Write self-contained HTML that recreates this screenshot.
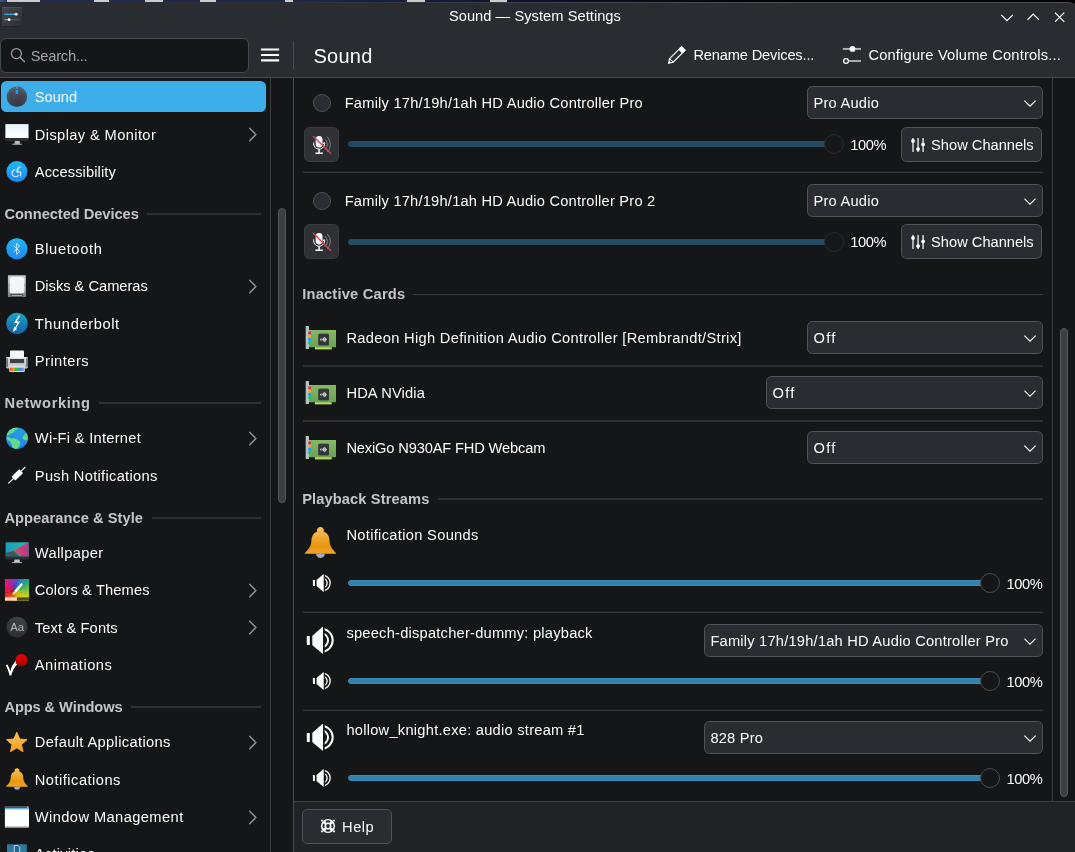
<!DOCTYPE html>
<html lang="en">
<head>
<meta charset="utf-8">
<title>Sound — System Settings</title>
<style>
html,body{margin:0;padding:0;background:#141618;}
body{width:1075px;height:852px;overflow:hidden;position:relative;font-family:"Liberation Sans",sans-serif;font-size:14.67px;color:#fcfcfc;}
#win{position:absolute;left:0;top:0;width:1075px;height:852px;overflow:hidden;will-change:transform;}
.b{position:absolute;display:block;}
.t{position:absolute;white-space:pre;}
</style>
</head>
<body>
<div id="win">
<div id="chrome" aria-hidden="true">
<div class="b" style="left:0px;top:0px;width:1075px;height:3px;background:#000000;"></div>
<div class="b" style="left:0px;top:0px;width:1075px;height:2px;background:linear-gradient(90deg,#4a5590 0,#222c52 8px,#1d2748 300px,#0e1230 520px,#05060a 720px,#000 820px);"></div>
<div class="b" style="left:7px;top:0px;width:33px;height:2px;background:#c9cacd;"></div>
<div class="b" style="left:93.5px;top:0px;width:15.5px;height:2px;background:#c9cacd;"></div>
<div class="b" style="left:145px;top:0px;width:18px;height:2px;background:#c9cacd;"></div>
<div class="b" style="left:200px;top:0px;width:16px;height:2px;background:#c9cacd;"></div>
<div class="b" style="left:285px;top:0px;width:8px;height:2px;background:#c9cacd;"></div>
<div class="b" style="left:407px;top:0px;width:18px;height:2px;background:#c9cacd;"></div>
<div class="b" style="left:490px;top:0px;width:17px;height:2px;background:#c9cacd;"></div>
<div class="b" style="left:0px;top:2px;width:1075px;height:76px;background:#292c30;border-top-right-radius:6px;overflow:hidden;"></div>
<div class="b" style="left:0px;top:2px;width:1075px;height:6px;border-top-right-radius:6px;box-sizing:border-box;border-top:1px solid #4a4d51;border-right:1px solid #3a3d41;-webkit-mask-image:linear-gradient(90deg,rgba(0,0,0,0) 0,rgba(0,0,0,0.15) 300px,#000 700px);mask-image:linear-gradient(90deg,rgba(0,0,0,0) 0,rgba(0,0,0,0.15) 300px,#000 700px);"></div>
<div class="b" style="left:0px;top:77px;width:1075px;height:1px;background:#474b50;"></div>
<div class="b" style="left:0px;top:78px;width:1075px;height:774px;background:#141618;"></div>
<div class="b" style="left:294px;top:801px;width:781px;height:51px;background:#202326;"></div>
<div class="b" style="left:294px;top:801px;width:781px;height:1px;background:#3d4044;"></div>
<div class="b" style="left:270px;top:78px;width:1px;height:774px;background:#3a3c3f;"></div>
<div class="b" style="left:293px;top:78px;width:1px;height:774px;background:#484c52;"></div>
<div class="b" style="left:293px;top:41px;width:1px;height:28px;background:#4b4f54;"></div>
<div class="b" style="left:1052px;top:78px;width:1px;height:723px;background:#3b3d40;"></div>
</div>
<header id="titlebar">
<svg class="b" style="left:2px;top:7px;" width="20" height="20" viewBox="0 0 20 20"><defs><linearGradient id="g1" x1="0" y1="0" x2="1" y2="1"><stop offset="0" stop-color="#45484c"/><stop offset="1" stop-color="#2b2e32"/></linearGradient></defs><rect x="0" y="0" width="20" height="20" rx="1" fill="url(#g1)"/><rect x="0.5" y="0" width="19" height="0.8" fill="#5a5d61" opacity="0.8"/><rect x="0.5" y="19.3" width="19" height="0.7" fill="#1b1d20"/><path d="M2.3 7.3H14" stroke="#3daee9" stroke-width="1.3"/><path d="M14 7.3H17.5" stroke="#4a4d51" stroke-width="1"/><circle cx="14.1" cy="7.3" r="1.4" fill="#fff"/><path d="M2.3 12.7H7" stroke="#3daee9" stroke-width="1.3"/><path d="M8 12.7H17.5" stroke="#4f5256" stroke-width="1.2"/><circle cx="7.1" cy="12.7" r="1.4" fill="#fff"/></svg>
<div class="t" style="left:448.90px;top:4.26px;line-height:24px;letter-spacing:0.042px;">Sound — System Settings</div>
<svg class="b" style="left:999px;top:10px;" width="70" height="16" viewBox="0 0 70 16"><g fill="none" stroke="#fcfcfc" stroke-width="1.25"><path d="M2.2 4.9 8 10.7 13.8 4.9"/><path d="M28.5 9.8 34.2 4.1 39.9 9.8"/><path d="M56 2.6 65.3 11.9M65.3 2.6 56 11.9"/></g></svg>
</header>
<div id="toolbar" role="toolbar">
<div class="b" style="left:0px;top:38px;width:248.5px;height:35px;background:#141618;border:1px solid #46494d;border-radius:6px;box-sizing:border-box;"></div>
<svg class="b" style="left:10px;top:46px;" width="18" height="18" viewBox="0 0 18 18"><g fill="none" stroke="#9a9ea2" stroke-width="1.25"><circle cx="6.4" cy="7.6" r="5"/><path d="M10 11.2 14.5 15.7" stroke-linecap="round"/></g></svg>
<div class="t" style="left:30.70px;top:43.76px;line-height:24px;color:#a1a3a6;letter-spacing:-0.207px;">Search...</div>
<svg class="b" style="left:261px;top:48px;" width="19" height="14" viewBox="0 0 19 14"><g fill="#fcfcfc"><rect x="0" y="0.4" width="18.1" height="2.2" rx="0.3"/><rect x="0" y="5.9" width="18.1" height="2.2" rx="0.3"/><rect x="0" y="11.3" width="18.1" height="2.2" rx="0.3"/></g></svg>
<div class="t" style="left:313.40px;top:40.36px;line-height:32px;font-size:20px;letter-spacing:0.289px;">Sound</div>
<svg class="b" style="left:666px;top:45px;" width="22" height="22" viewBox="0 0 22 22"><g transform="translate(2.1 18.7) rotate(-45)"><path d="M0.7 0 L4.6 -2.5 H21.6 V2.5 H4.6 Z" fill="none" stroke="#fcfcfc" stroke-width="1.2" stroke-linejoin="miter"/><rect x="17.2" y="-2.5" width="4.4" height="5" fill="#fcfcfc"/><path d="M4.6 -2.5 V2.5" stroke="#fcfcfc" stroke-width="1.1" fill="none"/><path d="M0.7 0 L2.9 -1.4 V1.4Z" fill="#fcfcfc"/></g></svg>
<div class="t" style="left:693.40px;top:43.26px;line-height:24px;letter-spacing:-0.176px;">Rename Devices...</div>
<svg class="b" style="left:841px;top:44px;" width="22" height="22" viewBox="0 0 22 22"><path d="M1.8 4.9H20" stroke="#b4b6b8" stroke-width="1.9"/><circle cx="11.5" cy="4.9" r="2.9" fill="#fcfcfc"/><path d="M7.6 17H20" stroke="#b4b6b8" stroke-width="1.9"/><circle cx="5" cy="17" r="2.4" fill="none" stroke="#fcfcfc" stroke-width="1.3"/></svg>
<div class="t" style="left:868.40px;top:43.26px;line-height:24px;letter-spacing:0.190px;">Configure Volume Controls...</div>
</div>
<nav id="sidebar">
<div class="b" style="left:1px;top:81px;width:264.5px;height:31.4px;background:#3daee9;border-radius:5.5px;"></div>
<svg class="b" style="left:4px;top:84px;" width="26" height="26" viewBox="4 84 26 26"><defs><linearGradient id="g2" x1="0" y1="0" x2="0" y2="1"><stop offset="0" stop-color="#626977"/><stop offset="1" stop-color="#353b45"/></linearGradient><linearGradient id="g3" x1="0" y1="0" x2="0" y2="1"><stop offset="0" stop-color="#4e5460"/><stop offset="1" stop-color="#333a44"/></linearGradient></defs><circle cx="16.9" cy="96.7" r="10.15" fill="url(#g2)"/><circle cx="16.9" cy="96.7" r="9.6" fill="none" stroke="#3a404a" stroke-width="1.1" stroke-dasharray="1.6 1.4" opacity="0.55"/><circle cx="16.9" cy="96.7" r="8.3" fill="url(#g3)"/><rect x="15.9" y="87.2" width="2" height="1.3" fill="#5aaeea" opacity="0.8"/><rect x="15.6" y="89.9" width="2.6" height="4" rx="0.6" fill="#1d99f3"/></svg>
<div class="t" style="left:34.80px;top:85.16px;line-height:24px;">Sound</div>
<svg class="b" style="left:4px;top:121px;" width="26" height="26" viewBox="4 121 26 26"><defs><linearGradient id="g4" x1="0" y1="0" x2="0" y2="1"><stop offset="0" stop-color="#e6f6fd"/><stop offset="1" stop-color="#ffffff"/></linearGradient></defs><rect x="5.2" y="123.9" width="23.5" height="17.2" rx="0.8" fill="#2a2c2f"/><rect x="5.4" y="124.1" width="23.1" height="13.9" fill="url(#g4)"/><rect x="14.7" y="141.1" width="5.1" height="2.8" fill="#c3c7ca"/><rect x="12.2" y="143.7" width="9.6" height="1.1" fill="#a9adb1"/></svg>
<div class="t" style="left:34.80px;top:122.66px;line-height:24px;letter-spacing:0.384px;">Display &amp; Monitor</div>
<svg class="b" style="left:246px;top:126px;" width="14" height="17" viewBox="0 0 14 17"><path d="M3.7 2.3 9.9 8.5 3.7 14.7" fill="none" stroke="#909295" stroke-width="1.5" stroke-linecap="round" stroke-linejoin="round"/></svg>
<svg class="b" style="left:4px;top:159px;" width="26" height="26" viewBox="4 159 26 26"><defs><linearGradient id="g5" x1="0" y1="0" x2="0" y2="1"><stop offset="0" stop-color="#22b6f9"/><stop offset="1" stop-color="#1e88ef"/></linearGradient></defs><circle cx="16.9" cy="171.6" r="10.5" fill="url(#g5)"/><g fill="none" stroke="#e6f4ff" stroke-linecap="round" stroke-linejoin="round"><path d="M14.67 169.72A3.6 3.6 0 1 0 18.55 175.26" stroke-width="1.05"/><path d="M17.9 168.4 17.2 171.6" stroke-width="1.7"/><path d="M17.2 172H20.6V175.9" stroke-width="1.05"/></g><circle cx="19.5" cy="167.3" r="0.95" fill="#e6f4ff"/></svg>
<div class="t" style="left:34.80px;top:160.16px;line-height:24px;letter-spacing:0.098px;">Accessibility</div>
<div class="t" style="left:4.40px;top:201.86px;line-height:24px;font-weight:700;color:#c4c5c6;letter-spacing:-0.051px;">Connected Devices</div>
<div class="b" style="left:147.4px;top:213px;width:113.6px;height:2px;background:#2c3033;"></div>
<svg class="b" style="left:4px;top:236px;" width="26" height="26" viewBox="4 236 26 26"><defs><linearGradient id="g6" x1="0" y1="0" x2="0" y2="1"><stop offset="0" stop-color="#22b6f9"/><stop offset="1" stop-color="#1e88ef"/></linearGradient></defs><circle cx="16.9" cy="248.8" r="10.6" fill="url(#g6)"/><path d="M13.6 245.6 19.7 251.6 16.7 254.3V243.3L19.7 246 13.6 252" fill="none" stroke="#dff1fe" stroke-width="0.9" stroke-linejoin="round"/></svg>
<div class="t" style="left:34.80px;top:236.86px;line-height:24px;letter-spacing:0.633px;">Bluetooth</div>
<svg class="b" style="left:4px;top:273px;" width="26" height="26" viewBox="4 273 26 26"><defs><linearGradient id="g7" x1="0" y1="0" x2="0" y2="1"><stop offset="0" stop-color="#c9cdcf"/><stop offset="1" stop-color="#79848a"/></linearGradient></defs><rect x="7.9" y="275.2" width="18" height="21.7" rx="0.7" fill="url(#g7)"/><path d="M12.3 277H21.8Q24.4 277 24.4 279.6V283.2Q23.5 285.1 24.4 287V290.7Q24.4 293.3 21.8 293.3H12.3Q9.7 293.3 9.7 290.7V287Q10.6 285.1 9.7 283.2V279.6Q9.7 277 12.3 277Z" fill="#f4f5f6"/><rect x="10.4" y="294.1" width="12.9" height="2.5" rx="0.9" fill="#3b4246"/><rect x="11.6" y="294.9" width="10.6" height="1.1" fill="#e8a838"/></svg>
<div class="t" style="left:34.80px;top:274.36px;line-height:24px;letter-spacing:-0.015px;">Disks &amp; Cameras</div>
<svg class="b" style="left:246px;top:278px;" width="14" height="17" viewBox="0 0 14 17"><path d="M3.7 2.3 9.9 8.5 3.7 14.7" fill="none" stroke="#909295" stroke-width="1.5" stroke-linecap="round" stroke-linejoin="round"/></svg>
<svg class="b" style="left:4px;top:311px;" width="26" height="26" viewBox="4 311 26 26"><defs><linearGradient id="g8" x1="0" y1="0" x2="0" y2="1"><stop offset="0" stop-color="#1ba3c6"/><stop offset="1" stop-color="#1560a6"/></linearGradient></defs><circle cx="17" cy="323.4" r="10.7" fill="url(#g8)"/><path d="M19.4 315.7 15.4 322.2H18.7L15.6 328" fill="none" stroke="#fff" stroke-width="1.35" stroke-linejoin="miter"/><path d="M14.2 326.7 17 329.1 13 331.9Z" fill="#fff"/></svg>
<div class="t" style="left:34.80px;top:311.86px;line-height:24px;letter-spacing:0.607px;">Thunderbolt</div>
<svg class="b" style="left:4px;top:348px;" width="26" height="26" viewBox="4 348 26 26"><defs><linearGradient id="g9" x1="0" y1="0" x2="1" y2="0"><stop offset="0" stop-color="#e8503a"/><stop offset="0.22" stop-color="#e89a1c"/><stop offset="0.48" stop-color="#2fc03a"/><stop offset="0.74" stop-color="#3a8ff0"/><stop offset="1" stop-color="#c084e0"/></linearGradient><linearGradient id="g10" x1="0" y1="0" x2="0" y2="1"><stop offset="0" stop-color="#e2e5e8"/><stop offset="1" stop-color="#b9bec3"/></linearGradient></defs><rect x="6" y="357" width="22" height="11.4" rx="1.4" fill="url(#g10)"/><rect x="6.3" y="358.2" width="1.4" height="8.6" fill="#4c525a"/><rect x="26.3" y="358.2" width="1.4" height="8.6" fill="#4c525a"/><rect x="9.9" y="358.6" width="14.2" height="4.5" fill="#3a4148"/><rect x="10" y="350.4" width="14" height="8.3" rx="0.9" fill="#f4f5f6"/><rect x="9.2" y="365.4" width="15.6" height="6.5" rx="0.9" fill="#dcdfe2"/><rect x="10" y="367.7" width="14" height="3.3" fill="url(#g9)"/><rect x="26.4" y="365" width="1.1" height="1.3" fill="#38b35a"/></svg>
<div class="t" style="left:34.80px;top:349.36px;line-height:24px;letter-spacing:0.471px;">Printers</div>
<div class="t" style="left:4.40px;top:391.26px;line-height:24px;font-weight:700;color:#c4c5c6;letter-spacing:0.654px;">Networking</div>
<div class="b" style="left:98.7px;top:402px;width:162.3px;height:2px;background:#2c3033;"></div>
<svg class="b" style="left:4px;top:425px;" width="26" height="26" viewBox="4 425 26 26"><defs><linearGradient id="g11" x1="0" y1="0" x2="0" y2="1"><stop offset="0" stop-color="#25a0e0"/><stop offset="1" stop-color="#1f86ee"/></linearGradient><clipPath id="c12"><circle cx="17" cy="438.2" r="10.8"/></clipPath></defs><circle cx="17" cy="438.2" r="10.8" fill="url(#g11)"/><g clip-path="url(#c12)" fill="#62d98d"><path d="M7 431.5Q10 427.5 17 427.6L17.6 429.2 14 430.8 13.5 433 10.4 433.4 9.4 435.3 6 435Z"/><path d="M6.4 436.3 9.5 437.4 11.3 438.5 13.5 438 17.5 439.6 20.6 442.3 19.6 445.4 17.6 448.5 15 449.3 12.5 447.5 11.6 443.7 9.6 441 7.6 440Z"/><path d="M28.4 433 25.6 433.6 23 436.2 22.6 438.4 25 440.2 28.4 440.4Z"/></g></svg>
<div class="t" style="left:34.80px;top:426.26px;line-height:24px;letter-spacing:0.279px;">Wi-Fi &amp; Internet</div>
<svg class="b" style="left:246px;top:430px;" width="14" height="17" viewBox="0 0 14 17"><path d="M3.7 2.3 9.9 8.5 3.7 14.7" fill="none" stroke="#909295" stroke-width="1.5" stroke-linecap="round" stroke-linejoin="round"/></svg>
<svg class="b" style="left:4px;top:463px;" width="26" height="26" viewBox="4 463 26 26"><path d="M8.3 483.5 25.4 467" stroke="#e8e9ea" stroke-width="1.1"/><rect x="-5.3" y="-2.7" width="10.6" height="5.4" rx="0.4" fill="#fff" transform="translate(17.3 474.9) rotate(-44)"/></svg>
<div class="t" style="left:34.80px;top:463.76px;line-height:24px;letter-spacing:0.305px;">Push Notifications</div>
<div class="t" style="left:4.40px;top:505.66px;line-height:24px;font-weight:700;color:#c4c5c6;letter-spacing:0.055px;">Appearance &amp; Style</div>
<div class="b" style="left:151.6px;top:517px;width:109.4px;height:2px;background:#2c3033;"></div>
<svg class="b" style="left:4px;top:539px;" width="26" height="26" viewBox="4 539 26 26"><defs><linearGradient id="g13" x1="0" y1="0" x2="1" y2="0"><stop offset="0" stop-color="#1d9cc4"/><stop offset="1" stop-color="#1bc4a0"/></linearGradient><linearGradient id="g14" x1="0" y1="0" x2="1" y2="0"><stop offset="0" stop-color="#e34a5e"/><stop offset="1" stop-color="#b93495"/></linearGradient><clipPath id="c15"><rect x="5.5" y="542.2" width="23.2" height="14.4"/></clipPath></defs><rect x="5.2" y="541.9" width="23.8" height="17.6" rx="0.8" fill="#2a2c2f"/><g clip-path="url(#c15)"><rect x="5.5" y="542.2" width="23.2" height="14.4" fill="url(#g13)"/><path d="M5.5 553 13.5 550.7 20 556.6H5.5Z" fill="#41595b"/><path d="M28.7 542.2V556.6H22L13.5 550.7Z" fill="url(#g14)"/></g><rect x="14.3" y="559.5" width="5.4" height="2.6" fill="#c3c7ca"/><rect x="12.2" y="562" width="9.6" height="1.1" fill="#a9adb1"/></svg>
<div class="t" style="left:34.80px;top:540.66px;line-height:24px;letter-spacing:0.370px;">Wallpaper</div>
<svg class="b" style="left:4px;top:577px;" width="26" height="26" viewBox="4 577 26 26"><defs><clipPath id="c16"><rect x="4.9" y="579" width="24.2" height="21.8" rx="0.6"/></clipPath></defs><g clip-path="url(#c16)"><path d="M14.0 591.0L54.0 590.4L53.0 599.9Z" fill="#9ccb2d"/><path d="M14.0 591.0L53.2 598.8L50.3 607.8Z" fill="#bbd124"/><path d="M14.0 591.0L50.8 606.8L46.0 615.0Z" fill="#d3d21b"/><path d="M14.0 591.0L46.7 614.1L40.3 621.1Z" fill="#e1ce14"/><path d="M14.0 591.0L41.2 620.3L33.5 625.9Z" fill="#efca0d"/><path d="M14.0 591.0L34.5 625.4L25.8 629.2Z" fill="#f6bf0a"/><path d="M14.0 591.0L26.9 628.9L17.6 630.8Z" fill="#f5ae0a"/><path d="M14.0 591.0L18.7 630.7L9.3 630.7Z" fill="#f59d0a"/><path d="M14.0 591.0L10.4 630.8L1.1 628.9Z" fill="#f4880c"/><path d="M14.0 591.0L2.2 629.2L-6.5 625.4Z" fill="#f2700f"/><path d="M14.0 591.0L-5.5 625.9L-13.2 620.3Z" fill="#f15813"/><path d="M14.0 591.0L-12.3 621.1L-18.7 614.1Z" fill="#ef451b"/><path d="M14.0 591.0L-18.0 615.0L-22.8 606.8Z" fill="#ed3325"/><path d="M14.0 591.0L-22.3 607.8L-25.2 598.8Z" fill="#eb222f"/><path d="M14.0 591.0L-25.0 599.9L-26.0 590.4Z" fill="#ea1c3e"/><path d="M14.0 591.0L-26.0 591.6L-25.0 582.1Z" fill="#e91a4e"/><path d="M14.0 591.0L-25.2 583.2L-22.3 574.2Z" fill="#e8185d"/><path d="M14.0 591.0L-22.8 575.2L-18.0 567.0Z" fill="#e7186b"/><path d="M14.0 591.0L-18.7 567.9L-12.3 560.9Z" fill="#e61879"/><path d="M14.0 591.0L-13.2 561.7L-5.5 556.1Z" fill="#dc1b88"/><path d="M14.0 591.0L-6.5 556.6L2.2 552.8Z" fill="#be259b"/><path d="M14.0 591.0L1.1 553.1L10.4 551.2Z" fill="#a02fae"/><path d="M14.0 591.0L9.3 551.3L18.7 551.3Z" fill="#7e3cbb"/><path d="M14.0 591.0L17.6 551.2L26.9 553.1Z" fill="#594cc5"/><path d="M14.0 591.0L25.8 552.8L34.5 556.6Z" fill="#4067c4"/><path d="M14.0 591.0L33.5 556.1L41.2 561.7Z" fill="#2b87bf"/><path d="M14.0 591.0L40.3 560.9L46.7 567.9Z" fill="#2b9a9e"/><path d="M14.0 591.0L46.0 567.0L50.8 575.2Z" fill="#2faa78"/><path d="M14.0 591.0L50.3 574.2L53.2 583.2Z" fill="#54b65c"/><path d="M14.0 591.0L53.0 582.1L54.0 591.6Z" fill="#79c240"/><rect x="4.9" y="597.4" width="12" height="3.4" fill="#f8dcc4"/><rect x="16.9" y="597.4" width="12.2" height="3.4" fill="#4b4a34"/></g><path d="M21.4 582.9Q22.9 583.4 22.5 584.9L16.2 592.5 14.1 590.9Z" fill="#fff"/><path d="M14 591.4 15.7 592.7Q14.6 594.5 12.3 594.4Q13.5 593 14 591.4Z" fill="#fff"/></svg>
<div class="t" style="left:34.80px;top:578.16px;line-height:24px;letter-spacing:0.125px;">Colors &amp; Themes</div>
<svg class="b" style="left:246px;top:582px;" width="14" height="17" viewBox="0 0 14 17"><path d="M3.7 2.3 9.9 8.5 3.7 14.7" fill="none" stroke="#909295" stroke-width="1.5" stroke-linecap="round" stroke-linejoin="round"/></svg>
<svg class="b" style="left:4px;top:614px;" width="26" height="26" viewBox="4 614 26 26"><defs><linearGradient id="g17" x1="0" y1="0" x2="0" y2="1"><stop offset="0" stop-color="#3f4246"/><stop offset="1" stop-color="#2b2e32"/></linearGradient></defs><circle cx="17" cy="627.2" r="10.5" fill="url(#g17)"/><text x="17" y="631.4" text-anchor="middle" font-family="Liberation Sans, sans-serif" font-size="11.4" letter-spacing="-0.3" fill="#b8babc">Aa</text></svg>
<div class="t" style="left:34.80px;top:615.66px;line-height:24px;letter-spacing:0.132px;">Text &amp; Fonts</div>
<svg class="b" style="left:246px;top:619px;" width="14" height="17" viewBox="0 0 14 17"><path d="M3.7 2.3 9.9 8.5 3.7 14.7" fill="none" stroke="#909295" stroke-width="1.5" stroke-linecap="round" stroke-linejoin="round"/></svg>
<svg class="b" style="left:4px;top:652px;" width="26" height="26" viewBox="4 652 26 26"><defs><linearGradient id="g18" x1="0" y1="0" x2="0" y2="1"><stop offset="0" stop-color="#f60000"/><stop offset="1" stop-color="#980000"/></linearGradient></defs><path d="M5.9 665.3 7.3 664.5Q9.3 667.6 10.3 671.2Q11.6 665 15.8 660.4L18 663.4Q13.2 667.6 11.2 675.6H9.6Q8.4 670.2 5.9 665.3Z" fill="#fff"/><circle cx="21.5" cy="660.3" r="6.2" fill="url(#g18)"/></svg>
<div class="t" style="left:34.80px;top:653.16px;line-height:24px;letter-spacing:0.498px;">Animations</div>
<div class="t" style="left:4.40px;top:694.86px;line-height:24px;font-weight:700;color:#c4c5c6;letter-spacing:-0.097px;">Apps &amp; Windows</div>
<div class="b" style="left:131.3px;top:706px;width:129.7px;height:2px;background:#2c3033;"></div>
<svg class="b" style="left:4px;top:729px;" width="26" height="26" viewBox="4 729 26 26"><defs><linearGradient id="g19" x1="0" y1="0" x2="0" y2="1"><stop offset="0" stop-color="#fdc050"/><stop offset="1" stop-color="#f3a21e"/></linearGradient></defs><path d="M16.75 732.20L19.69 738.95L27.02 739.66L21.51 744.55L23.10 751.74L16.75 748.00L10.40 751.74L11.99 744.55L6.48 739.66L13.81 738.95Z" fill="url(#g19)" stroke="url(#g19)" stroke-width="0.9" stroke-linejoin="round"/></svg>
<div class="t" style="left:34.80px;top:730.16px;line-height:24px;letter-spacing:0.361px;">Default Applications</div>
<svg class="b" style="left:246px;top:734px;" width="14" height="17" viewBox="0 0 14 17"><path d="M3.7 2.3 9.9 8.5 3.7 14.7" fill="none" stroke="#909295" stroke-width="1.5" stroke-linecap="round" stroke-linejoin="round"/></svg>
<svg class="b" style="left:4px;top:766px;" width="26" height="26" viewBox="4 766 26 26"><defs><linearGradient id="g20" x1="0" y1="0" x2="0" y2="1"><stop offset="0" stop-color="#f8c065"/><stop offset="0.72" stop-color="#e9960c"/><stop offset="1" stop-color="#f0a52a"/></linearGradient></defs><g transform="translate(6 768.2) scale(0.6875)"><path d="M11.6 27a4.4 4.4 0 0 0 8.8 0Z" fill="#a3aab8"/><path d="M16 0C18.1 0 19.5 1.4 19.5 3.1C19.5 3.7 19.4 4.1 19.1 4.6C23 6 24.9 9.2 25.1 13.2C25.3 18.2 26.6 21.3 31.8 26.4Q32 27 31.4 27H0.6Q0 27 0.2 26.4C5.4 21.3 6.7 18.2 6.9 13.2C7.1 9.2 9 6 12.9 4.6C12.6 4.1 12.5 3.7 12.5 3.1C12.5 1.4 13.9 0 16 0Z" fill="url(#g20)"/></g></svg>
<div class="t" style="left:34.80px;top:767.66px;line-height:24px;letter-spacing:0.480px;">Notifications</div>
<svg class="b" style="left:4px;top:804px;" width="26" height="26" viewBox="4 804 26 26"><rect x="4.9" y="806" width="24.1" height="21.5" fill="#ffffff"/><rect x="4.9" y="806" width="24.1" height="2.4" fill="#4f555b"/><rect x="4.9" y="808.3" width="24.1" height="1" fill="#3daee9"/><rect x="4.9" y="826.5" width="24.1" height="1" fill="#8d969c"/><rect x="27" y="806.6" width="1.2" height="1.2" fill="#c8ccd0"/></svg>
<div class="t" style="left:34.80px;top:805.16px;line-height:24px;letter-spacing:0.416px;">Window Management</div>
<svg class="b" style="left:246px;top:809px;" width="14" height="17" viewBox="0 0 14 17"><path d="M3.7 2.3 9.9 8.5 3.7 14.7" fill="none" stroke="#909295" stroke-width="1.5" stroke-linecap="round" stroke-linejoin="round"/></svg>
<svg class="b" style="left:4px;top:841px;" width="26" height="26" viewBox="4 841 26 26"><rect x="7" y="844.3" width="19.8" height="12" fill="#2f789f"/><path d="M14.3 852V845.6H18L19.7 847.3V852" fill="#1f668c" stroke="#e4eef4" stroke-width="0.8"/></svg>
<div class="t" style="left:34.80px;top:841.76px;line-height:24px;letter-spacing:0.241px;">Activities</div>
<div class="b" style="left:278px;top:208px;width:8px;height:294.5px;background:#3d3e40;border:1px solid #555759;border-radius:4px;box-sizing:border-box;"></div>
</nav>
<main id="content">
<div class="b" style="left:313px;top:94px;width:18px;height:18px;background:#292c30;border:1px solid #505357;border-radius:9px;box-sizing:border-box;"></div>
<div class="t" style="left:344.70px;top:91.26px;line-height:24px;letter-spacing:0.215px;">Family 17h/19h/1ah HD Audio Controller Pro</div>
<div class="b" style="left:807px;top:86px;width:236px;height:33px;background:#292c30;border:1px solid #505357;border-radius:5.5px;box-sizing:border-box;"></div>
<div class="t" style="left:813.40px;top:91.06px;line-height:24px;letter-spacing:0.242px;">Pro Audio</div>
<svg class="b" style="left:1023.1px;top:98.9px;" width="14" height="9" viewBox="0 0 14 9"><path d="M1.4 1.6 7 7.2 12.6 1.6" fill="none" stroke="#fcfcfc" stroke-width="1.25"/></svg>
<div class="b" style="left:304px;top:127px;width:35.3px;height:35.3px;background:#2f3134;border:1px solid #3a3c3f;border-radius:5.5px;box-sizing:border-box;"></div>
<svg class="b" style="left:311px;top:134px;" width="22" height="22" viewBox="0 0 22 22"><g fill="none" stroke="#808286" stroke-width="1"><path d="M16.22 2.92A10.4 10.4 0 0 1 16.22 17.88"/><path d="M14.25 5.33A7.3 7.3 0 0 1 14.25 15.47"/></g><rect x="4.7" y="2" width="6.8" height="11.5" rx="3.4" fill="#fcfcfc"/><path d="M2.6 8.4v1.3a5.5 5.5 0 0 0 11 0V8.4" fill="none" stroke="#fcfcfc" stroke-width="1"/><path d="M8.1 15.2V19M4.4 19.2H11.8" fill="none" stroke="#fcfcfc" stroke-width="1.5"/><circle cx="12.7" cy="9.4" r="0.8" fill="#fcfcfc"/><path d="M2 2 20 19.8" stroke="#da4453" stroke-width="1.4"/></svg>
<div class="b" style="left:347.5px;top:141px;width:486.0px;height:6px;background:#234b63;border-radius:3px;"></div>
<div class="b" style="left:823.5px;top:134px;width:20px;height:20px;background:#151719;border:1px solid #2a2d30;border-radius:10px;box-sizing:border-box;"></div>
<div class="t" style="left:850.20px;top:132.56px;line-height:24px;letter-spacing:-0.400px;">100%</div>
<div class="b" style="left:901px;top:127px;width:141px;height:35px;background:#292c30;border:1px solid #505357;border-radius:5.5px;box-sizing:border-box;"></div>
<svg class="b" style="left:910px;top:137px;" width="16" height="16" viewBox="0 0 16 16"><g stroke="#c2c4c6" stroke-width="1.7"><path d="M3 1.1V15M8.1 1.1V15M13.1 1.1V15"/></g><g fill="#fcfcfc"><circle cx="3" cy="4" r="1.9"/><circle cx="8.1" cy="12.1" r="1.9"/><circle cx="13.1" cy="7.4" r="1.9"/></g></svg>
<div class="t" style="left:931.10px;top:132.86px;line-height:24px;letter-spacing:-0.006px;">Show Channels</div>
<div class="b" style="left:303px;top:171px;width:740px;height:1px;background:#1d2022;"></div>
<div class="b" style="left:303px;top:172px;width:740px;height:1px;background:#35383b;"></div>
<div class="b" style="left:313px;top:192px;width:18px;height:18px;background:#292c30;border:1px solid #505357;border-radius:9px;box-sizing:border-box;"></div>
<div class="t" style="left:344.70px;top:189.26px;line-height:24px;letter-spacing:0.211px;">Family 17h/19h/1ah HD Audio Controller Pro 2</div>
<div class="b" style="left:807px;top:184px;width:236px;height:33px;background:#292c30;border:1px solid #505357;border-radius:5.5px;box-sizing:border-box;"></div>
<div class="t" style="left:813.40px;top:189.06px;line-height:24px;letter-spacing:0.242px;">Pro Audio</div>
<svg class="b" style="left:1023.1px;top:196.9px;" width="14" height="9" viewBox="0 0 14 9"><path d="M1.4 1.6 7 7.2 12.6 1.6" fill="none" stroke="#fcfcfc" stroke-width="1.25"/></svg>
<div class="b" style="left:304px;top:224px;width:35.3px;height:35.3px;background:#2f3134;border:1px solid #3a3c3f;border-radius:5.5px;box-sizing:border-box;"></div>
<svg class="b" style="left:311px;top:231px;" width="22" height="22" viewBox="0 0 22 22"><g fill="none" stroke="#808286" stroke-width="1"><path d="M16.22 2.92A10.4 10.4 0 0 1 16.22 17.88"/><path d="M14.25 5.33A7.3 7.3 0 0 1 14.25 15.47"/></g><rect x="4.7" y="2" width="6.8" height="11.5" rx="3.4" fill="#fcfcfc"/><path d="M2.6 8.4v1.3a5.5 5.5 0 0 0 11 0V8.4" fill="none" stroke="#fcfcfc" stroke-width="1"/><path d="M8.1 15.2V19M4.4 19.2H11.8" fill="none" stroke="#fcfcfc" stroke-width="1.5"/><circle cx="12.7" cy="9.4" r="0.8" fill="#fcfcfc"/><path d="M2 2 20 19.8" stroke="#da4453" stroke-width="1.4"/></svg>
<div class="b" style="left:347.5px;top:239px;width:486.0px;height:6px;background:#234b63;border-radius:3px;"></div>
<div class="b" style="left:823.5px;top:232px;width:20px;height:20px;background:#151719;border:1px solid #2a2d30;border-radius:10px;box-sizing:border-box;"></div>
<div class="t" style="left:850.20px;top:229.56px;line-height:24px;letter-spacing:-0.400px;">100%</div>
<div class="b" style="left:901px;top:224px;width:141px;height:35px;background:#292c30;border:1px solid #505357;border-radius:5.5px;box-sizing:border-box;"></div>
<svg class="b" style="left:910px;top:234px;" width="16" height="16" viewBox="0 0 16 16"><g stroke="#c2c4c6" stroke-width="1.7"><path d="M3 1.1V15M8.1 1.1V15M13.1 1.1V15"/></g><g fill="#fcfcfc"><circle cx="3" cy="4" r="1.9"/><circle cx="8.1" cy="12.1" r="1.9"/><circle cx="13.1" cy="7.4" r="1.9"/></g></svg>
<div class="t" style="left:931.10px;top:229.86px;line-height:24px;letter-spacing:-0.006px;">Show Channels</div>
<div class="t" style="left:302.20px;top:282.26px;line-height:24px;font-weight:700;color:#c4c5c6;letter-spacing:0.215px;">Inactive Cards</div>
<div class="b" style="left:413.4px;top:294px;width:629.6px;height:1px;background:#36393c;"></div>
<svg class="b" style="left:304px;top:324px;" width="34" height="28" viewBox="0 0 34 28"><defs><linearGradient id="g21" x1="0" y1="0" x2="0" y2="1"><stop offset="0" stop-color="#86b868"/><stop offset="1" stop-color="#67a04f"/></linearGradient></defs><path d="M5 6H32V23.3H27.6V25.3H10.9V23.3H5Z" fill="url(#g21)"/><rect x="10.9" y="23.3" width="16.7" height="2" fill="#b9d45f"/><rect x="1.7" y="2" width="3.3" height="23" rx="0.5" fill="#b3c6c6"/><rect x="4.2" y="7.4" width="2.8" height="2.8" rx="0.6" fill="#e2245f"/><rect x="4.2" y="10.8" width="2.8" height="2.8" rx="0.6" fill="#f5a81f"/><rect x="4.2" y="14" width="2.8" height="2.8" rx="0.6" fill="#1d9bf2"/><rect x="4.2" y="17.3" width="2.8" height="2.8" rx="0.6" fill="#1cc27a"/><rect x="15" y="9" width="9.4" height="13" rx="1" fill="#5b9048"/><rect x="14.2" y="10" width="10.8" height="11.2" rx="1" fill="#343638"/><path d="M15.9 15.6 17.4 13.8V17.4ZM18 15.6 20.6 12.6V18.6ZM20.9 12.9 22.9 15.6 20.9 18.3Z" fill="#cfd6d8"/></svg>
<div class="t" style="left:346.40px;top:326.26px;line-height:24px;letter-spacing:0.318px;">Radeon High Definition Audio Controller [Rembrandt/Strix]</div>
<div class="b" style="left:807px;top:321px;width:236px;height:33px;background:#292c30;border:1px solid #505357;border-radius:5.5px;box-sizing:border-box;"></div>
<div class="t" style="left:813.40px;top:326.06px;line-height:24px;letter-spacing:1.359px;">Off</div>
<svg class="b" style="left:1023.1px;top:333.9px;" width="14" height="9" viewBox="0 0 14 9"><path d="M1.4 1.6 7 7.2 12.6 1.6" fill="none" stroke="#fcfcfc" stroke-width="1.25"/></svg>
<div class="b" style="left:303px;top:365px;width:740px;height:2px;background:#2c3033;"></div>
<svg class="b" style="left:304px;top:379px;" width="34" height="28" viewBox="0 0 34 28"><defs><linearGradient id="g22" x1="0" y1="0" x2="0" y2="1"><stop offset="0" stop-color="#86b868"/><stop offset="1" stop-color="#67a04f"/></linearGradient></defs><path d="M5 6H32V23.3H27.6V25.3H10.9V23.3H5Z" fill="url(#g22)"/><rect x="10.9" y="23.3" width="16.7" height="2" fill="#b9d45f"/><rect x="1.7" y="2" width="3.3" height="23" rx="0.5" fill="#b3c6c6"/><rect x="4.2" y="7.4" width="2.8" height="2.8" rx="0.6" fill="#e2245f"/><rect x="4.2" y="10.8" width="2.8" height="2.8" rx="0.6" fill="#f5a81f"/><rect x="4.2" y="14" width="2.8" height="2.8" rx="0.6" fill="#1d9bf2"/><rect x="4.2" y="17.3" width="2.8" height="2.8" rx="0.6" fill="#1cc27a"/><rect x="15" y="9" width="9.4" height="13" rx="1" fill="#5b9048"/><rect x="14.2" y="10" width="10.8" height="11.2" rx="1" fill="#343638"/><path d="M15.9 15.6 17.4 13.8V17.4ZM18 15.6 20.6 12.6V18.6ZM20.9 12.9 22.9 15.6 20.9 18.3Z" fill="#cfd6d8"/></svg>
<div class="t" style="left:346.40px;top:381.26px;line-height:24px;letter-spacing:0.153px;">HDA NVidia</div>
<div class="b" style="left:766px;top:376px;width:277px;height:33px;background:#292c30;border:1px solid #505357;border-radius:5.5px;box-sizing:border-box;"></div>
<div class="t" style="left:772.40px;top:381.06px;line-height:24px;letter-spacing:1.359px;">Off</div>
<svg class="b" style="left:1023.1px;top:388.9px;" width="14" height="9" viewBox="0 0 14 9"><path d="M1.4 1.6 7 7.2 12.6 1.6" fill="none" stroke="#fcfcfc" stroke-width="1.25"/></svg>
<div class="b" style="left:303px;top:420px;width:740px;height:2px;background:#2c3033;"></div>
<svg class="b" style="left:304px;top:434px;" width="34" height="28" viewBox="0 0 34 28"><defs><linearGradient id="g23" x1="0" y1="0" x2="0" y2="1"><stop offset="0" stop-color="#86b868"/><stop offset="1" stop-color="#67a04f"/></linearGradient></defs><path d="M5 6H32V23.3H27.6V25.3H10.9V23.3H5Z" fill="url(#g23)"/><rect x="10.9" y="23.3" width="16.7" height="2" fill="#b9d45f"/><rect x="1.7" y="2" width="3.3" height="23" rx="0.5" fill="#b3c6c6"/><rect x="4.2" y="7.4" width="2.8" height="2.8" rx="0.6" fill="#e2245f"/><rect x="4.2" y="10.8" width="2.8" height="2.8" rx="0.6" fill="#f5a81f"/><rect x="4.2" y="14" width="2.8" height="2.8" rx="0.6" fill="#1d9bf2"/><rect x="4.2" y="17.3" width="2.8" height="2.8" rx="0.6" fill="#1cc27a"/><rect x="15" y="9" width="9.4" height="13" rx="1" fill="#5b9048"/><rect x="14.2" y="10" width="10.8" height="11.2" rx="1" fill="#343638"/><path d="M15.9 15.6 17.4 13.8V17.4ZM18 15.6 20.6 12.6V18.6ZM20.9 12.9 22.9 15.6 20.9 18.3Z" fill="#cfd6d8"/></svg>
<div class="t" style="left:346.40px;top:436.26px;line-height:24px;letter-spacing:-0.154px;">NexiGo N930AF FHD Webcam</div>
<div class="b" style="left:807px;top:431px;width:236px;height:33px;background:#292c30;border:1px solid #505357;border-radius:5.5px;box-sizing:border-box;"></div>
<div class="t" style="left:813.40px;top:436.06px;line-height:24px;letter-spacing:1.359px;">Off</div>
<svg class="b" style="left:1023.1px;top:443.9px;" width="14" height="9" viewBox="0 0 14 9"><path d="M1.4 1.6 7 7.2 12.6 1.6" fill="none" stroke="#fcfcfc" stroke-width="1.25"/></svg>
<div class="t" style="left:302.20px;top:486.76px;line-height:24px;font-weight:700;color:#c4c5c6;letter-spacing:0.108px;">Playback Streams</div>
<div class="b" style="left:437.5px;top:498px;width:605.5px;height:2px;background:#2c3033;"></div>
<svg class="b" style="left:303px;top:525px;" width="35" height="35" viewBox="0 0 35 35"><defs><linearGradient id="g24" x1="0" y1="0" x2="0" y2="1"><stop offset="0" stop-color="#f8c065"/><stop offset="0.72" stop-color="#e9960c"/><stop offset="1" stop-color="#f0a52a"/></linearGradient></defs><g transform="translate(1.6 2) scale(0.990625)"><path d="M11.6 27a4.4 4.4 0 0 0 8.8 0Z" fill="#a3aab8"/><path d="M16 0C18.1 0 19.5 1.4 19.5 3.1C19.5 3.7 19.4 4.1 19.1 4.6C23 6 24.9 9.2 25.1 13.2C25.3 18.2 26.6 21.3 31.8 26.4Q32 27 31.4 27H0.6Q0 27 0.2 26.4C5.4 21.3 6.7 18.2 6.9 13.2C7.1 9.2 9 6 12.9 4.6C12.6 4.1 12.5 3.7 12.5 3.1C12.5 1.4 13.9 0 16 0Z" fill="url(#g24)"/></g></svg>
<div class="t" style="left:346.40px;top:523.26px;line-height:24px;letter-spacing:0.317px;">Notification Sounds</div>
<svg class="b" style="left:312px;top:573px;" width="20" height="20" viewBox="0 0 20 20"><g transform="translate(0.8 0.9) scale(0.6667) translate(-3.6 -3.7)"><defs><clipPath id="c25"><rect x="21.7" y="0" width="14" height="35"/></clipPath></defs><g fill="#fcfcfc"><rect x="3.8" y="13" width="3" height="8.9" rx="0.3"/><path d="M9.3 13.2Q9.3 12.8 9.7 12.4L19.3 4.1Q20 3.5 20 4.4V30.3Q20 31.2 19.3 30.6L9.7 22.4Q9.3 22 9.3 21.6Z"/></g><g fill="none" stroke="#fcfcfc" clip-path="url(#c25)"><circle cx="18.1" cy="17.35" r="11.6" stroke-width="2"/><circle cx="18.1" cy="17.35" r="7" stroke-width="2"/></g></g></svg>
<div class="b" style="left:348px;top:580px;width:641.5px;height:6px;background:#3282ae;border-radius:3px;box-sizing:border-box;border:1px solid #3a8bba;"></div>
<div class="b" style="left:979.5px;top:573px;width:20px;height:20px;background:#141618;border:1px solid #4b4d50;border-radius:10px;box-sizing:border-box;"></div>
<div class="t" style="left:1006.40px;top:571.56px;line-height:24px;letter-spacing:-0.400px;">100%</div>
<div class="b" style="left:303px;top:611px;width:740px;height:1px;background:#1d2022;"></div>
<div class="b" style="left:303px;top:612px;width:740px;height:1px;background:#35383b;"></div>
<svg class="b" style="left:303px;top:623px;" width="35" height="35" viewBox="0 0 35 35"><defs><clipPath id="c26"><rect x="21.7" y="0" width="14" height="35"/></clipPath></defs><g fill="#fcfcfc"><rect x="3.8" y="13" width="3" height="8.9" rx="0.3"/><path d="M9.3 13.2Q9.3 12.8 9.7 12.4L19.3 4.1Q20 3.5 20 4.4V30.3Q20 31.2 19.3 30.6L9.7 22.4Q9.3 22 9.3 21.6Z"/></g><g fill="none" stroke="#fcfcfc" clip-path="url(#c26)"><circle cx="18.1" cy="17.35" r="11.6" stroke-width="2"/><circle cx="18.1" cy="17.35" r="7" stroke-width="2"/></g></svg>
<div class="t" style="left:346.40px;top:621.26px;line-height:24px;letter-spacing:0.229px;">speech-dispatcher-dummy: playback</div>
<div class="b" style="left:704px;top:624px;width:339px;height:33px;background:#292c30;border:1px solid #505357;border-radius:5.5px;box-sizing:border-box;"></div>
<div class="t" style="left:710.40px;top:629.06px;line-height:24px;letter-spacing:0.215px;">Family 17h/19h/1ah HD Audio Controller Pro</div>
<svg class="b" style="left:1023.1px;top:636.9px;" width="14" height="9" viewBox="0 0 14 9"><path d="M1.4 1.6 7 7.2 12.6 1.6" fill="none" stroke="#fcfcfc" stroke-width="1.25"/></svg>
<svg class="b" style="left:312px;top:671px;" width="20" height="20" viewBox="0 0 20 20"><g transform="translate(0.8 0.9) scale(0.6667) translate(-3.6 -3.7)"><defs><clipPath id="c27"><rect x="21.7" y="0" width="14" height="35"/></clipPath></defs><g fill="#fcfcfc"><rect x="3.8" y="13" width="3" height="8.9" rx="0.3"/><path d="M9.3 13.2Q9.3 12.8 9.7 12.4L19.3 4.1Q20 3.5 20 4.4V30.3Q20 31.2 19.3 30.6L9.7 22.4Q9.3 22 9.3 21.6Z"/></g><g fill="none" stroke="#fcfcfc" clip-path="url(#c27)"><circle cx="18.1" cy="17.35" r="11.6" stroke-width="2"/><circle cx="18.1" cy="17.35" r="7" stroke-width="2"/></g></g></svg>
<div class="b" style="left:348px;top:678px;width:641.5px;height:6px;background:#3282ae;border-radius:3px;box-sizing:border-box;border:1px solid #3a8bba;"></div>
<div class="b" style="left:979.5px;top:671px;width:20px;height:20px;background:#141618;border:1px solid #4b4d50;border-radius:10px;box-sizing:border-box;"></div>
<div class="t" style="left:1006.40px;top:669.56px;line-height:24px;letter-spacing:-0.400px;">100%</div>
<div class="b" style="left:303px;top:709px;width:740px;height:1px;background:#1d2022;"></div>
<div class="b" style="left:303px;top:710px;width:740px;height:1px;background:#35383b;"></div>
<svg class="b" style="left:303px;top:720px;" width="35" height="35" viewBox="0 0 35 35"><defs><clipPath id="c28"><rect x="21.7" y="0" width="14" height="35"/></clipPath></defs><g fill="#fcfcfc"><rect x="3.8" y="13" width="3" height="8.9" rx="0.3"/><path d="M9.3 13.2Q9.3 12.8 9.7 12.4L19.3 4.1Q20 3.5 20 4.4V30.3Q20 31.2 19.3 30.6L9.7 22.4Q9.3 22 9.3 21.6Z"/></g><g fill="none" stroke="#fcfcfc" clip-path="url(#c28)"><circle cx="18.1" cy="17.35" r="11.6" stroke-width="2"/><circle cx="18.1" cy="17.35" r="7" stroke-width="2"/></g></svg>
<div class="t" style="left:346.40px;top:718.26px;line-height:24px;letter-spacing:0.250px;">hollow_knight.exe: audio stream #1</div>
<div class="b" style="left:704px;top:721px;width:339px;height:33px;background:#292c30;border:1px solid #505357;border-radius:5.5px;box-sizing:border-box;"></div>
<div class="t" style="left:710.40px;top:726.06px;line-height:24px;letter-spacing:0.193px;">828 Pro</div>
<svg class="b" style="left:1023.1px;top:733.9px;" width="14" height="9" viewBox="0 0 14 9"><path d="M1.4 1.6 7 7.2 12.6 1.6" fill="none" stroke="#fcfcfc" stroke-width="1.25"/></svg>
<svg class="b" style="left:312px;top:768px;" width="20" height="20" viewBox="0 0 20 20"><g transform="translate(0.8 0.9) scale(0.6667) translate(-3.6 -3.7)"><defs><clipPath id="c29"><rect x="21.7" y="0" width="14" height="35"/></clipPath></defs><g fill="#fcfcfc"><rect x="3.8" y="13" width="3" height="8.9" rx="0.3"/><path d="M9.3 13.2Q9.3 12.8 9.7 12.4L19.3 4.1Q20 3.5 20 4.4V30.3Q20 31.2 19.3 30.6L9.7 22.4Q9.3 22 9.3 21.6Z"/></g><g fill="none" stroke="#fcfcfc" clip-path="url(#c29)"><circle cx="18.1" cy="17.35" r="11.6" stroke-width="2"/><circle cx="18.1" cy="17.35" r="7" stroke-width="2"/></g></g></svg>
<div class="b" style="left:348px;top:775px;width:641.5px;height:6px;background:#3282ae;border-radius:3px;box-sizing:border-box;border:1px solid #3a8bba;"></div>
<div class="b" style="left:979.5px;top:768px;width:20px;height:20px;background:#141618;border:1px solid #4b4d50;border-radius:10px;box-sizing:border-box;"></div>
<div class="t" style="left:1006.40px;top:766.56px;line-height:24px;letter-spacing:-0.400px;">100%</div>
<div class="b" style="left:1060px;top:328px;width:8px;height:469px;background:#3d3e40;border:1px solid #555759;border-radius:4px;box-sizing:border-box;"></div>
</main>
<footer id="footer">
<div class="b" style="left:302px;top:809px;width:90px;height:35px;background:#292c30;border:1px solid #505357;border-radius:5px;box-sizing:border-box;"></div>
<svg class="b" style="left:320px;top:818px;" width="16" height="16" viewBox="0 0 16 16"><circle cx="8" cy="8" r="7.1" fill="#fcfcfc"/><path d="M11.21 6.37L12.99 5.46A5.6 5.6 0 0 1 12.99 10.54L11.21 9.63A3.6 3.6 0 0 0 11.21 6.37Z" fill="#292c30"/><path d="M9.63 11.21L10.54 12.99A5.6 5.6 0 0 1 5.46 12.99L6.37 11.21A3.6 3.6 0 0 0 9.63 11.21Z" fill="#292c30"/><path d="M4.79 9.63L3.01 10.54A5.6 5.6 0 0 1 3.01 5.46L4.79 6.37A3.6 3.6 0 0 0 4.79 9.63Z" fill="#292c30"/><path d="M6.37 4.79L5.46 3.01A5.6 5.6 0 0 1 10.54 3.01L9.63 4.79A3.6 3.6 0 0 0 6.37 4.79Z" fill="#292c30"/><circle cx="8" cy="8" r="1.9" fill="#292c30"/><g fill="#fcfcfc" opacity="0.9"><rect x="1" y="1.6" width="1.9" height="1.9" transform="rotate(45 1.95 2.55)"/><rect x="13.1" y="1.6" width="1.9" height="1.9" transform="rotate(45 14.05 2.55)"/><rect x="1" y="12.5" width="1.9" height="1.9" transform="rotate(45 1.95 13.45)"/><rect x="13.1" y="12.5" width="1.9" height="1.9" transform="rotate(45 14.05 13.45)"/></g></svg>
<div class="t" style="left:342.10px;top:815.06px;line-height:24px;letter-spacing:0.481px;">Help</div>
</footer>
</div>
</body>
</html>
